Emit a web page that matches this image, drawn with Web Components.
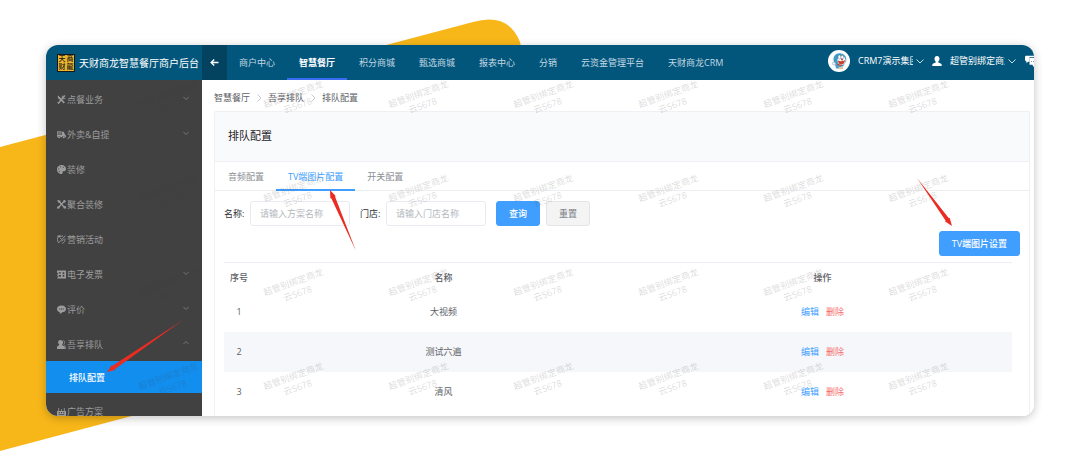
<!DOCTYPE html>
<html lang="zh-CN">
<head>
<meta charset="utf-8">
<title>天财商龙智慧餐厅商户后台</title>
<style>
  html, body { margin: 0; height: 100%; background: #fff; }
  body { font: 9px/12px "Open Sans", "Noto Sans CJK SC", sans-serif; color: #606266; }
</style>
</head>
<body>
<admin-page></admin-page>

<script>
const define = (name, html, setup) => {
  const template = document.createElement('template');
  template.innerHTML = html;
  customElements.define(name, class extends HTMLElement {
    connectedCallback() {
      if (this.shadowRoot) return;
      this.attachShadow({ mode: 'open' }).append(template.content.cloneNode(true));
      if (setup) setup.call(this, this.shadowRoot);
    }
  });
};

/* Small glyphs shared by the bars and the menu */
const ICONS = {
  down: '<path d="M1 5l7 7 7-7" fill="none" stroke="currentColor" stroke-width="1.6"/>',
  up: '<path d="M1 11l7-7 7 7" fill="none" stroke="currentColor" stroke-width="1.6"/>',
  right: '<path d="M5 1l7 7-7 7" fill="none" stroke="currentColor" stroke-width="1.6"/>',
  back: '<path d="M15 8H2M7.500 2.500L2 8l5.500 5.500" fill="none" stroke="currentColor" stroke-width="2.400"/>',
  user: '<path d="M8 0c2.600 0 4 2 4 4.500C12 6.500 11 8.200 10 9v1.500c1 .8 5 1.500 5.500 3V16H.5v-2.500C1 12 5 11.300 6 10.500V9C5 8.200 4 6.500 4 4.500 4 2 5.400 0 8 0z"/>',
  dine: '<path d="M2 1l12 12-2 2L6 9 3 7C1 5 1 3 2 1z"/><path d="M14 1L2 15" stroke="currentColor" stroke-width="2.600"/><path d="M10 1l-1 4 2 2 4-1M1 13l2 2" fill="none" stroke="currentColor" stroke-width="1.500"/>',
  scooter: '<path d="M0 2h8v6H0zM9 3h3l2 5 2 2v3h-2a2.500 2.500 0 0 0-5 0H6a2.500 2.500 0 0 0-5 0H0V9h9z"/><circle cx="3.500" cy="13" r="1.800"/><circle cx="12" cy="13" r="1.800"/><path d="M1 4h6M1 6h6" stroke="#414141"/>',
  palette: '<path fill-rule="evenodd" d="M8 0c5 0 8 3 8 7 0 3-2 4-4 4-2 0-3 0-2 2 .5 2-.5 3-2 3-4 0-8-3-8-8s4-8 8-8zM3 6a1 1 0 1 0 .1 0zM6 2a1 1 0 1 0 .1 0zM11 3a1 1 0 1 0 .1 0zM4 10a1 1 0 1 0 .1 0z"/>',
  tools: '<path d="M2 1l12 13M14 1L2 14" stroke="currentColor" stroke-width="2.400"/><path d="M0 1h6v4H3zM11 11h5v4h-4zM0 12l3-1 2 3-4 2zM11 1l3-1 2 3-3 2z"/>',
  promo: '<path d="M3 14C0 10 0 5 3 2h8M14 6c1 4-1 8-5 9M3 14L15 1M5 5l3 2M8 11l4-3" fill="none" stroke="currentColor" stroke-width="1.500"/><path d="M1 1h5v3H1z"/>',
  invoice: '<path fill-rule="evenodd" d="M0 1h16v14H0l2-3-2-3 2-2-2-3zM3 4v2h4V4zM3 9v3h4V9zM10 4v8h3V4z"/><path d="M9 8h5" stroke="currentColor" stroke-width="1.500"/>',
  comment: '<path fill-rule="evenodd" d="M8 1c5 0 8 2.500 8 6s-3 6-7 6c0 1-2 2-4 3v-3C2 12 0 10 0 7c0-3.500 3-6 8-6zM4 6v2h2V6zM7 6v2h2V6zM10 6v2h2V6z"/>',
  queue: '<path d="M6 0c3 0 5 2 5 4 0 2-1 3-2 4v1l5 3v4H0v-4l4-3V8C3 7 2 6 2 4c0-2 1-4 4-4z"/><path d="M11 1c3 0 4 5 1 7l3 3v5" fill="none" stroke="currentColor" stroke-width="1.200"/>',
  ad: '<path fill-rule="evenodd" d="M0 7h16v9H0zM3 9v2h2V9zM7 9v2h2V9zM11 9v2h2V9zM3 13v1h10v-1z"/><path d="M3 7V2M13 7V2M8 7V4" stroke="currentColor" stroke-width="1.500"/>',
  chat: '<path d="M1 1h11v2H6v6H4l-2 2V9L0 7V2z"/><path fill-rule="evenodd" d="M6 4h10v9h-3l-2 3-1-3H6zM8 8v1h1V8zM11 8v1h1V8zM14 8v1h1V8z"/>'
};

define('ui-icon', `
  <style>:host{display:block;flex:none;width:9px;height:9px} svg{display:block;width:100%;height:100%}</style>
  <svg viewBox="0 0 16 16" fill="currentColor" aria-hidden="true"></svg>`,
  function (root) { root.querySelector('svg').innerHTML = ICONS[this.getAttribute('name')] || ''; });

/* Red pointer drawn as a tapered shaft with a barbed head */
define('red-arrow', `
  <style>:host{display:block} svg{display:block;width:100%;height:100%;overflow:visible;fill:#ea2c22}</style>
  <svg aria-hidden="true"><polygon/></svg>`,
  function (root) {
    const [tx, ty, hx, hy] = this.getAttribute('line').split(' ').map(Number);
    const len = Math.hypot(hx - tx, hy - ty), ux = (hx - tx) / len, uy = (hy - ty) / len;
    const at = (back, side) => `${hx - ux * back - uy * side},${hy - uy * back + ux * side}`;
    root.querySelector('polygon').setAttribute('points',
      [at(0, 0), at(8, 3), at(8, 2), at(len, 0), at(8, -2), at(8, -3)].join(' '));
  });

define('water-mark', `
  <style>
    :host{display:grid;grid-template-columns:repeat(auto-fill,125px);grid-auto-rows:94px;place-items:center;pointer-events:none;color:rgba(64,64,64,.2);overflow:hidden}
    span{display:block;text-align:center;white-space:nowrap;transform:rotate(-20deg)}
  </style>`,
  function (root) {
    for (let i = 0; i < 28; i++) {
      const s = document.createElement('span');
      s.setAttribute('aria-hidden', 'true');
      s.innerHTML = '超管别绑定商龙<br>云5678';
      root.append(s);
    }
  });

define('brand-logo', `
  <style>
    :host{display:flex;align-items:center;gap:4px;color:#fff;font-size:10px;white-space:nowrap}
    .mark{display:grid;grid-template-columns:8px 8px;grid-auto-rows:8px;width:16px;border:1px solid #15181a;background:#edb62f;color:#15181a;font-size:7px;line-height:8px;font-weight:500;text-align:center}
  </style>
  <div class="mark"><span>天</span><span>商</span><span>财</span><span>龍</span></div>
  <span>天财商龙智慧餐厅商户后台</span>`);

define('user-avatar', `
  <style>:host{display:block;flex:none;width:22px;height:22px} svg{display:block}</style>
  <svg width="22" height="22" viewBox="0 0 22 22" role="img" aria-label="头像">
    <circle cx="11" cy="11" r="11" fill="#fff"/>
    <path d="M6 12C4 6 9 2.500 13 3.500c5 1 6 5 5 8l-3 5-7-1z" fill="#3f9ac6"/>
    <ellipse cx="13.500" cy="10.500" rx="4" ry="4.500" fill="#fff"/>
    <ellipse cx="11.500" cy="7" rx="1.500" ry="2" fill="#fff" stroke="#456" stroke-width=".4"/>
    <ellipse cx="14.300" cy="7.200" rx="1.400" ry="1.900" fill="#fff" stroke="#456" stroke-width=".4"/>
    <circle cx="14" cy="9.400" r="1" fill="#d9372c"/>
    <path d="M10 10.500c2 1 5 1 7-.5 0 3-2 5-4.500 4.500-1.500-.4-2.500-2-2.500-4z" fill="#c9402f"/>
    <path d="M7 14l7 1.500-1 3H8z" fill="#4aa3cc"/><path d="M9 14.500l5 1" stroke="#d9372c"/>
    <circle cx="6" cy="13.500" r="1.600" fill="#e8f1f5" stroke="#789" stroke-width=".4"/>
    <ellipse cx="13" cy="18" rx="2.500" ry="1.300" fill="#e6c79c"/>
  </svg>`);

define('top-bar', `
  <style>
    :host{display:flex;flex:none;height:35px;background:#02567c;color:#fff}
    brand-logo{flex:none;width:145px;padding-left:11px}
    button{border:0;margin:0;padding:0;background:none;color:inherit;font:inherit;display:flex;align-items:center}
    .back{flex:none;width:25px;justify-content:center;background:#04435f}
    nav{display:flex;flex:1;min-width:0}
    nav a{display:flex;align-items:center;padding:0 12px;color:#c3d8e2;text-decoration:none;white-space:nowrap}
    nav a[aria-current]{color:#fff;font-weight:700;box-shadow:inset 0 -2px #3b6bf0}
    .account{display:flex;align-items:center;flex:none;gap:8px;padding-bottom:3px}
    .account button{gap:3px}
    .account span{width:55px;overflow:hidden;white-space:nowrap;text-align:left}
    .account ui-icon{width:10px;height:10px}
    .account ui-icon[name=down]{width:8px;height:8px}
    .account .chat{width:10px;overflow:hidden}
    .account .chat ui-icon{width:14px;height:12px}
  </style>
  <brand-logo></brand-logo>
  <button class="back" aria-label="返回"><ui-icon name="back"></ui-icon></button>
  <nav>
    <a href="#">商户中心</a><a href="#" aria-current="page">智慧餐厅</a><a href="#">积分商城</a><a href="#">甄选商城</a><a href="#">报表中心</a><a href="#">分销</a><a href="#">云资金管理平台</a><a href="#">天财商龙CRM</a>
  </nav>
  <div class="account">
    <user-avatar></user-avatar>
    <button><span>CRM7演示集团</span><ui-icon name="down"></ui-icon></button>
    <ui-icon name="user"></ui-icon>
    <button><span>超管别绑定商龙</span><ui-icon name="down"></ui-icon></button>
    <button class="chat" aria-label="消息"><ui-icon name="chat"></ui-icon></button>
  </div>`);

define('menu-item', `
  <style>
    :host{display:block;flex:none}
    a{display:flex;align-items:center;gap:1px;height:35px;box-sizing:border-box;padding:2px 13px 0 11px;color:#9c9c9c;text-decoration:none;white-space:nowrap}
    .label{flex:1}
    .arrow{width:6px;height:6px;margin-bottom:4px}
    :host([active]) a{height:32px;padding-left:23px;background:#128eef;color:#fff;font-weight:500}
  </style>
  <a href="#"><span class="label"><slot></slot></span></a>`,
  function (root) {
    const a = root.querySelector('a');
    const icon = (name, cls) => {
      const el = document.createElement('ui-icon');
      el.setAttribute('name', name);
      if (cls) el.className = cls;
      return el;
    };
    if (this.hasAttribute('icon')) a.prepend(icon(this.getAttribute('icon')));
    if (this.hasAttribute('fold')) a.append(icon(this.getAttribute('fold'), 'arrow'));
  });

define('side-menu', `
  <style>:host{display:flex;flex-direction:column;flex:none;width:156px;padding-top:1px;box-sizing:border-box;background:#414141;overflow:hidden}</style>
  <menu-item icon="dine" fold="down">点餐业务</menu-item>
  <menu-item icon="scooter" fold="down">外卖&amp;自提</menu-item>
  <menu-item icon="palette">装修</menu-item>
  <menu-item icon="tools">聚合装修</menu-item>
  <menu-item icon="promo">营销活动</menu-item>
  <menu-item icon="invoice" fold="down">电子发票</menu-item>
  <menu-item icon="comment" fold="down">评价</menu-item>
  <menu-item icon="queue" fold="up">吾享排队</menu-item>
  <menu-item active>排队配置</menu-item>
  <menu-item icon="ad">广告方案</menu-item>`);

define('bread-crumb', `
  <style>
    :host{display:flex;align-items:center;flex:none;gap:5px;height:31px;padding-top:4px;box-sizing:border-box}
    a{color:inherit;text-decoration:none}
    ui-icon{width:8px;height:8px;color:#b4b8bf}
  </style>
  <a href="#">智慧餐厅</a><ui-icon name="right"></ui-icon><a href="#">吾享排队</a><ui-icon name="right"></ui-icon><span>排队配置</span>`);

define('tab-bar', `
  <style>
    :host{display:flex;flex:none;height:29px;box-sizing:border-box;padding-left:1px;border-bottom:1px solid #eceef2}
    button{border:0;margin:0 0 -1px;padding:0 12px;background:none;font:inherit;color:#8c8f94}
    button[aria-selected=true]{color:#409eff;border-bottom:2px solid #409eff;padding-top:2px}
  </style>
  <button role="tab">音频配置</button><button role="tab" aria-selected="true">TV端图片配置</button><button role="tab">开关配置</button>`,
  function () { this.setAttribute('role', 'tablist'); });

define('ui-button', `
  <style>
    :host{display:block;flex:none}
    button{display:block;height:25px;box-sizing:border-box;margin:0;padding:0 12px;border:1px solid #409eff;border-radius:3px;background:#409eff;color:#fff;font:inherit;font-weight:500;white-space:nowrap}
    :host([plain]) button{background:#f4f4f5;border-color:#e4e5e8;color:#85888d}
  </style>
  <button><slot></slot></button>`);

define('text-field', `
  <style>
    :host{display:flex;align-items:center;flex:none}
    label{color:#303133;width:26px;white-space:nowrap}
    input{width:100px;height:25px;box-sizing:border-box;margin:0;padding:0 9px;border:1px solid #e9ebf0;border-radius:3px;background:#fff;font:inherit;color:#606266;outline:0}
    input::placeholder{color:#b4b8c0;opacity:1}
  </style>
  <label for="field"></label><input id="field" type="text">`,
  function (root) {
    root.querySelector('label').textContent = this.getAttribute('label');
    root.querySelector('input').placeholder = this.getAttribute('hint');
  });

define('plan-table', `
  <style>
    :host{display:block;margin-right:8px}
    table{width:100%;border-collapse:collapse;table-layout:fixed;border-top:1px solid #ebeef3}
    .no{width:30px}
    th{height:29px;padding:0;font-weight:500;color:#5e6066}
    td{height:40px;padding:0;text-align:center}
    tbody tr:nth-child(even){background:#f5f7fa}
    a{color:#409eff;text-decoration:none}
    a + a{color:#f56c6c;margin-left:7px}
  </style>
  <table>
    <colgroup><col class="no"><col><col></colgroup>
    <thead><tr><th>序号</th><th>名称</th><th>操作</th></tr></thead>
    <tbody></tbody>
  </table>`,
  function (root) {
    root.querySelector('tbody').innerHTML = ['大视频', '测试六遍', '清风'].map((name, i) =>
      `<tr><td>${i + 1}</td><td>${name}</td><td><a href="#">编辑</a><a href="#">删除</a></td></tr>`).join('');
  });

define('queue-config', `
  <style>
    :host{display:flex;flex-direction:column;flex:1;min-width:0;padding:0 4px 0 12px;background:#fff;overflow:hidden}
    .card{flex:1;display:flex;flex-direction:column;min-height:0;border:1px solid #eef0f3;border-bottom:0;border-radius:2px 2px 0 0}
    h1{flex:none;margin:0;height:50px;box-sizing:border-box;padding:0 13px 2px;display:flex;align-items:center;font-size:11px;font-weight:400;color:#1f2226;background:#f9fafc;border-bottom:1px solid #eef0f3}
    .body{padding:10px 9px 0}
    form{display:flex;gap:10px;margin:0}
    form ui-button + ui-button{margin-left:-4px}
    .tools{display:flex;justify-content:flex-end;padding:5px 0 6px}
  </style>
  <bread-crumb></bread-crumb>
  <section class="card">
    <h1>排队配置</h1>
    <tab-bar></tab-bar>
    <div class="body">
      <form onsubmit="return false">
        <text-field label="名称:" hint="请输入方案名称"></text-field>
        <text-field label="门店:" hint="请输入门店名称"></text-field>
        <ui-button>查询</ui-button><ui-button plain>重置</ui-button>
      </form>
      <div class="tools"><ui-button>TV端图片设置</ui-button></div>
      <plan-table></plan-table>
    </div>
  </section>`);

define('admin-page', `
  <style>
    :host{display:block;position:relative;height:100vh;box-sizing:border-box;padding:45px 46px 55px;overflow:hidden}
    .deco{position:absolute;left:0;top:0}
    .window{position:relative;display:flex;flex-direction:column;height:100%;border-radius:12px;overflow:hidden;background:#fff}
    .shade{position:relative;height:100%;border-radius:12px;box-shadow:0 2px 10px rgba(0,0,0,.24)}
    main{position:relative;display:flex;flex:1;min-height:0;overflow:hidden}
    water-mark{position:absolute;top:-27px;left:62px;right:0;bottom:0}
    red-arrow{position:absolute}
    .to-menu{left:107px;top:320px;width:76px;height:52px}
    .to-tab{left:330px;top:190px;width:26px;height:61px}
    .to-set{right:128px;top:178px;width:35px;height:48px}
  </style>
  <svg class="deco" width="620" height="471" viewBox="0 0 620 471" aria-hidden="true">
    <path d="M0 147L473 22Q508 12 520 42L575 298 0 451z" fill="#f8b719"/>
  </svg>
  <div class="shade"><div class="window">
    <top-bar></top-bar>
    <main>
      <side-menu></side-menu>
      <queue-config></queue-config>
      <water-mark></water-mark>
    </main>
  </div></div>
  <red-arrow class="to-menu" line="76 0 0 52"></red-arrow>
  <red-arrow class="to-tab" line="26 61 0 0"></red-arrow>
  <red-arrow class="to-set" line="0 0 35 48"></red-arrow>`);
</script>
</body>
</html>
